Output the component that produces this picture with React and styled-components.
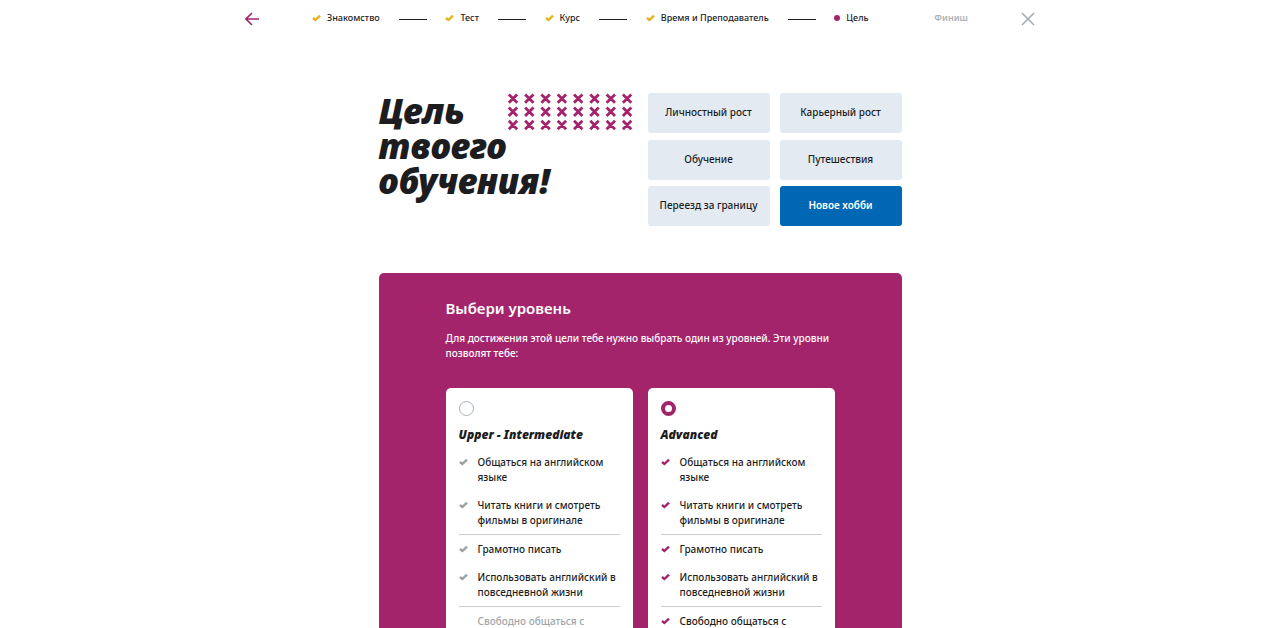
import { Fragment, useState } from "react";
import styled, { createGlobalStyle, css } from "styled-components";

const steps = [
  { label: "Знакомство", state: "done" },
  { label: "Тест", state: "done" },
  { label: "Курс", state: "done" },
  { label: "Время и Преподаватель", state: "done" },
  { label: "Цель", state: "current" },
  { label: "Финиш", state: "next" },
];

const goals = [
  "Личностный рост",
  "Карьерный рост",
  "Обучение",
  "Путешествия",
  "Переезд за границу",
  "Новое хобби",
];

const skills = [
  { text: "Общаться на английском языке" },
  { text: "Читать книги и смотреть фильмы в оригинале", divider: true },
  { text: "Грамотно писать" },
  { text: "Использовать английский в повседневной жизни", divider: true },
  { text: "Свободно общаться с" },
];

const levels = [
  { id: "upper", name: "Upper - Intermediate", reached: 4 },
  { id: "advanced", name: "Advanced", reached: 5 },
];

function Check() {
  return (
    <CheckIcon viewBox="0 0 9 8" aria-hidden="true">
      <path d="M1 4 L3.4 6 L8 1.6" />
    </CheckIcon>
  );
}

function Crosses() {
  const cells = [];
  for (let row = 0; row < 3; row++) {
    for (let col = 0; col < 8; col++) {
      const x = 1.8 + col * 16.3;
      const y = 1.4 + row * 13.2;
      cells.push(`M${x} ${y}l8.4 8.4m0 -8.4l-8.4 8.4`);
    }
  }
  return (
    <Pattern viewBox="0 0 126 38" aria-hidden="true">
      <path d={cells.join("")} />
    </Pattern>
  );
}

function Level({ level, checked, onSelect }) {
  return (
    <Card>
      <Radio
        type="radio"
        name="level"
        id={level.id}
        checked={checked}
        onChange={onSelect}
      />
      <CardTitle htmlFor={level.id}>{level.name}</CardTitle>
      <SkillList>
        {skills.map((skill, i) => (
          <Skill
            key={skill.text}
            $divider={skill.divider}
            $active={checked}
            $off={i >= level.reached}
          >
            <Check />
            <span>{skill.text}</span>
          </Skill>
        ))}
      </SkillList>
    </Card>
  );
}

export default function App() {
  const [goal, setGoal] = useState("Новое хобби");
  const [level, setLevel] = useState("advanced");

  return (
    <Page>
      <GlobalStyle />
      <Header>
        <IconButton aria-label="Назад" $color="#a4246c">
          <svg width="14" height="14" viewBox="0 0 14 14">
            <path d="M14 7H1M7 1L1 7l6 6" />
          </svg>
        </IconButton>
        <Steps>
          {steps.map((step, i) => (
            <Fragment key={step.label}>
              {i > 0 && <Line $hidden={step.state === "next"} />}
              <Step $state={step.state}>
                {step.state === "done" && <Check />}
                {step.state === "current" && <Dot />}
                {step.label}
              </Step>
            </Fragment>
          ))}
        </Steps>
        <IconButton aria-label="Закрыть" $color="#a3adb3">
          <svg width="14" height="14" viewBox="0 0 14 14">
            <path d="M1 1l12 12M13 1L1 13" />
          </svg>
        </IconButton>
      </Header>

      <Main>
        <Hero>
          <Intro>
            <Title>
              Цель
              <br />
              твоего
              <br />
              обучения!
            </Title>
            <Crosses />
          </Intro>
          <Goals>
            {goals.map((name) => (
              <Goal
                key={name}
                type="button"
                $active={name === goal}
                onClick={() => setGoal(name)}
              >
                {name}
              </Goal>
            ))}
          </Goals>
        </Hero>

        <Panel>
          <PanelTitle>Выбери уровень</PanelTitle>
          <PanelText>
            Для достижения этой цели тебе нужно выбрать один из уровней. Эти
            уровни позволят тебе:
          </PanelText>
          <Cards>
            {levels.map((item) => (
              <Level
                key={item.id}
                level={item}
                checked={item.id === level}
                onSelect={() => setLevel(item.id)}
              />
            ))}
          </Cards>
        </Panel>
      </Main>
    </Page>
  );
}

const GlobalStyle = createGlobalStyle`
  * {
    box-sizing: border-box;
  }
  body {
    margin: 0;
    background: #fff;
    color: #1d1d1f;
    font-family: "Noto Sans", "Open Sans", sans-serif;
    font-size: 10px;
    font-weight: 500;
  }
  button {
    font: inherit;
    color: inherit;
    border: 0;
    cursor: pointer;
  }
`;

const Page = styled.div`
  height: 100vh;
  overflow-y: auto;
  scrollbar-width: none;
`;

const Header = styled.header`
  display: flex;
  align-items: center;
  justify-content: space-between;
  max-width: 790px;
  height: 37px;
  margin: 0 auto;
`;

const IconButton = styled.button`
  display: flex;
  padding: 0;
  background: none;

  svg {
    fill: none;
    stroke: ${(props) => props.$color};
    stroke-width: 1.6;
  }
`;

const Steps = styled.nav`
  display: flex;
  align-items: center;
  justify-content: space-between;
  width: 656px;
`;

const Step = styled.span`
  display: flex;
  align-items: center;
  gap: 6px;
  padding-bottom: 2px;
  font-size: 9px;
  font-weight: ${(props) => (props.$state === "next" ? 600 : 500)};
  line-height: 14px;
  white-space: nowrap;
  color: ${(props) => (props.$state === "next" ? "#a9b3b9" : "#1d1d1f")};

  svg {
    stroke: #e3b21c;
  }
`;

const Line = styled.span`
  width: 28px;
  height: 1px;
  margin-top: 1px;
  background: #1d1d1f;
  visibility: ${(props) => (props.$hidden ? "hidden" : "visible")};
`;

const Dot = styled.span`
  width: 6px;
  height: 6px;
  border-radius: 50%;
  background: #a4246c;
`;

const CheckIcon = styled.svg`
  flex: none;
  width: 9px;
  height: 8px;
  fill: none;
  stroke-width: 2.4;
`;

const Main = styled.main`
  max-width: 523px;
  margin: 56px auto 0;
`;

const Hero = styled.section`
  display: grid;
  grid-template-columns: 1fr 1fr;
  gap: 15px;
`;

const Intro = styled.div`
  display: grid;

  > * {
    grid-area: 1 / 1;
  }
`;

const Title = styled.h1`
  margin: 0;
  font-size: 35px;
  font-style: italic;
  font-weight: 900;
  line-height: 35px;
`;

const Pattern = styled.svg`
  justify-self: end;
  width: 126px;
  height: 38px;
  fill: none;
  stroke: #a4246c;
  stroke-width: 2.8;
`;

const Goals = styled.div`
  display: grid;
  grid-template-columns: 1fr 1fr;
  grid-auto-rows: 40px;
  align-content: space-between;
  column-gap: 10px;
  height: 133px;
`;

const Goal = styled.button`
  padding: 0 0 2px;
  border-radius: 3px;
  background: #e3eaf2;
  white-space: nowrap;

  ${(props) =>
    props.$active &&
    css`
      background: #0067b5;
      color: #fff;
      font-weight: 600;
    `}
`;

const Panel = styled.section`
  margin-top: 47px;
  padding: 25px 67px 40px;
  border-radius: 5px;
  background: #a4246c;
  color: #fff;
`;

const PanelTitle = styled.h2`
  margin: 0;
  font-size: 15px;
  font-weight: 600;
  line-height: 20px;
`;

const PanelText = styled.p`
  margin: 13px 0 27px;
  line-height: 15px;
`;

const Cards = styled.div`
  display: grid;
  grid-template-columns: 1fr 1fr;
  gap: 15px;
`;

const Card = styled.article`
  padding: 13px;
  border-radius: 5px;
  background: #fff;
  color: #1d1d1f;
`;

const Radio = styled.input`
  display: block;
  appearance: none;
  width: 15px;
  height: 15px;
  margin: 0;
  border: 1px solid #a9b3b9;
  border-radius: 50%;

  &:checked {
    border: 4px solid #a4246c;
  }
`;

const CardTitle = styled.label`
  display: block;
  margin: 10px 0 4px;
  font-size: 12px;
  font-style: italic;
  font-weight: 900;
  line-height: 18px;
`;

const SkillList = styled.ul`
  margin: 0;
  padding: 0;
  list-style: none;
`;

const Skill = styled.li`
  display: flex;
  gap: 10px;
  padding: 7px 0 6px;
  line-height: 15px;

  svg {
    margin-top: 3px;
    stroke: ${(props) => (props.$active ? "#a4246c" : "#9aa1a5")};
  }

  ${(props) =>
    props.$divider &&
    css`
      border-bottom: 1px solid #c9cdd0;
    `}

  ${(props) =>
    props.$off &&
    css`
      color: #a0a7ab;

      svg {
        visibility: hidden;
      }
    `}
`;
